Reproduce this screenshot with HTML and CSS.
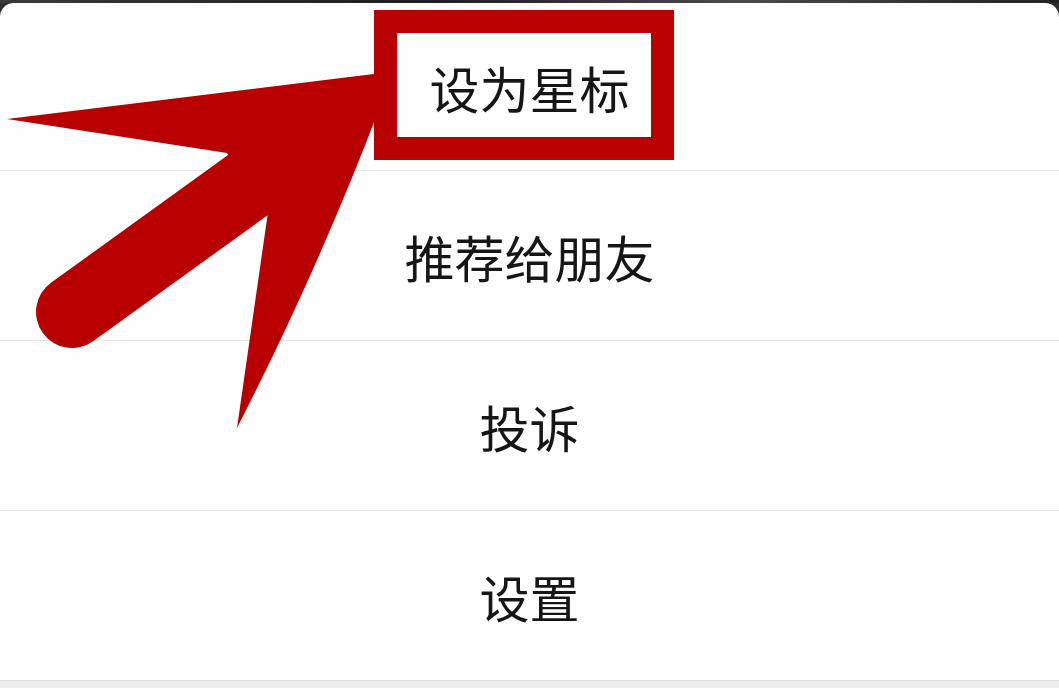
FILE: index.html
```html
<!DOCTYPE html>
<html lang="zh-CN">
<head>
    <meta charset="UTF-8">
    <meta name="viewport" content="width=device-width, initial-scale=1.0">
    <title>菜单</title>
<link rel="stylesheet" href="styles.css">
</head>
<body>
    <div class="photo-strip"></div>
    <div class="sheet">
        <div class="item first">设为星标</div>
        <div class="item">推荐给朋友</div>
        <div class="item">投诉</div>
        <div class="item last">设置</div>
    </div>
    <div class="bottom-bar"></div>

    <!-- annotation overlay -->
    <div class="mark-box"></div>
    <svg class="arrow" width="1059" height="688" viewBox="0 0 1059 688">
        <path d="M7,119 L382,73 L378,112 Q316,274 237,428 L268,212 L227,153 Z" fill="#b90000"/>
        <line x1="72" y1="312" x2="255" y2="180" stroke="#b90000" stroke-width="72" stroke-linecap="round"/>
    </svg>
</body>
</html>
```

FILE: styles.css
```css
body{
    margin: 0;
    width: 1059px;
    height: 688px;
    overflow: hidden;
    background-color: #2e2e2e;
    font-family: "Noto Sans CJK SC", "Noto Sans", sans-serif;
    position: relative;
}
.photo-strip{
    height: 3px;
    background: linear-gradient(90deg, #3a3a3a, #1d1d1d 40%, #4a4a4a 70%, #222);
}
.sheet{
    background-color: #fefefe;
    border-radius: 14px 14px 0 0;
    display: flex;
    flex-direction: column;
}
.item{
    height: 169px;
    border-bottom: 1px solid #e4e4e4;
    display: flex;
    align-items: center;
    justify-content: center;
    font-size: 50px;
    color: #161616;
}
.item.first{
    height: 167px;
}
.item.last{
    border-bottom-color: #d8d8d8;
}
.bottom-bar{
    height: 7px;
    background-color: #ececec;
}
.mark-box{
    position: absolute;
    left: 374px;
    top: 10px;
    width: 254px;
    height: 104px;
    border: 23px solid #b90000;
}
.arrow{
    position: absolute;
    left: 0;
    top: 0;
    pointer-events: none;
}
```
